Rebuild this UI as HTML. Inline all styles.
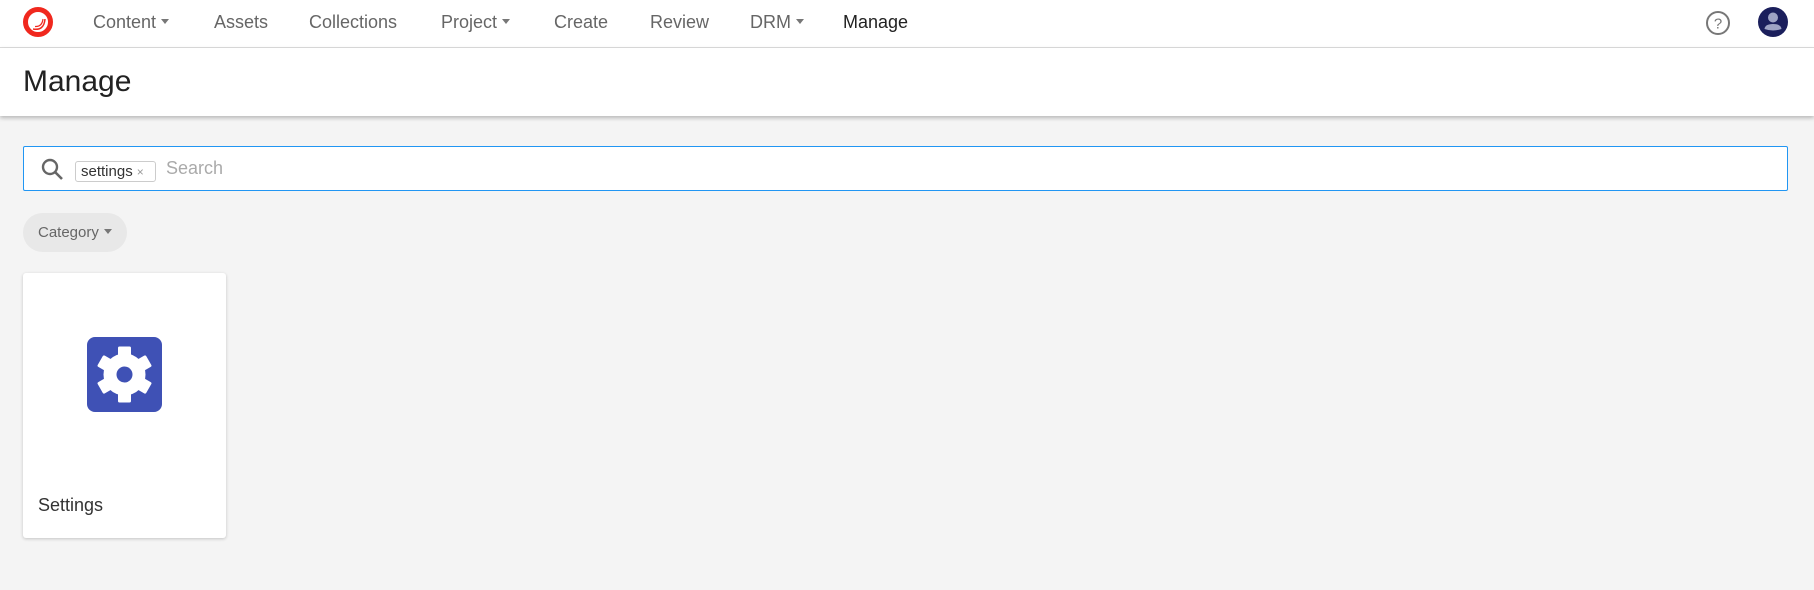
<!DOCTYPE html>
<html><head><meta charset="utf-8"><style>
*{margin:0;padding:0;box-sizing:border-box}
body{width:1814px;height:590px;background:#f4f4f4;font-family:"Liberation Sans",sans-serif;position:relative;overflow:hidden}
.nav{position:absolute;left:0;top:0;width:1814px;height:48px;background:#fff;border-bottom:1px solid #ddd}
.nav span{position:absolute;top:12px;font-size:18px;color:#666;white-space:nowrap}
.car{display:inline-block;width:0;height:0;border-left:4px solid transparent;border-right:4px solid transparent;border-top:5px solid #777;vertical-align:middle;margin-left:5px;margin-top:-3px}
.hdr{position:absolute;left:0;top:48px;width:1814px;height:68px;background:#fff;box-shadow:0 2px 4px rgba(0,0,0,.25)}
.hdr h1{position:absolute;left:23px;top:17px;font-weight:normal;font-size:30px;color:#222}
.search{position:absolute;left:23px;top:146px;width:1765px;height:45px;background:#fff;border:1px solid #2196f3;border-radius:2px}
.chip{position:absolute;left:51px;top:14px;width:81px;height:21px;border:1px solid #ccc;border-radius:3px;font-size:15px;color:#333;padding:1px 0 0 5px}
.chip i{font-style:normal;color:#999;font-size:12px;margin-left:4px}
.ph{position:absolute;left:142px;top:11px;font-size:18px;color:#aaa}
.cat{position:absolute;left:23px;top:213px;width:104px;height:39px;border-radius:20px;background:#e8e8e8;font-size:15px;color:#666;padding:11px 0 0 15px}
.card{position:absolute;left:23px;top:273px;width:203px;height:265px;background:#fff;border-radius:3px;box-shadow:0 1px 3px rgba(0,0,0,.2)}
.card .t{position:absolute;left:15px;top:222px;font-size:18px;color:#333}
</style></head><body>
<div class="nav">
<svg style="position:absolute;left:22px;top:6px" width="32" height="32" viewBox="0 0 32 32"><circle cx="16" cy="16" r="12.5" fill="#fff" stroke="#f0281e" stroke-width="5"/><path d="M11 23 Q22 25 23 13" stroke="#f0281e" stroke-width="1.5" fill="none"/><path d="M13 20.5 Q20 21 21 13" stroke="#f0281e" stroke-width="1.2" fill="none"/></svg>
<span style="left:93px">Content<i class="car"></i></span>
<span style="left:214px">Assets</span>
<span style="left:309px">Collections</span>
<span style="left:441px">Project<i class="car"></i></span>
<span style="left:554px">Create</span>
<span style="left:650px">Review</span>
<span style="left:750px">DRM<i class="car"></i></span>
<span style="left:843px;color:#222">Manage</span>
<svg style="position:absolute;left:1705px;top:10px" width="26" height="26" viewBox="0 0 26 26"><circle cx="13" cy="13" r="11" fill="none" stroke="#777" stroke-width="2"/><text x="13" y="18.5" font-size="15" text-anchor="middle" fill="#777" font-family="Liberation Sans">?</text></svg>
<svg style="position:absolute;left:1758px;top:7px" width="30" height="30" viewBox="0 0 30 30"><circle cx="15" cy="15" r="15" fill="#1b1f5c"/><circle cx="15" cy="10.5" r="5" fill="#9ea3c4"/><path d="M6.5 22 Q7 17 15 17 Q23 17 23.5 22 Q15 25 6.5 22Z" fill="#9ea3c4"/></svg>
</div>
<div class="hdr"><h1>Manage</h1></div>
<div class="search">
<svg style="position:absolute;left:16px;top:10px" width="26" height="26" viewBox="0 0 26 26"><circle cx="10" cy="10" r="7" fill="none" stroke="#666" stroke-width="2.4"/><path d="M15 15 L22 22" stroke="#666" stroke-width="2.6"/></svg>
<div class="chip">settings<i>×</i></div>
<div class="ph">Search</div>
</div>
<div class="cat">Category<i class="car"></i></div>
<div class="card">
<svg style="position:absolute;left:64px;top:64px" width="75" height="75" viewBox="0 0 75 75"><rect width="75" height="75" rx="8" fill="#3f51b5"/>
<g transform="translate(37.5,37.5)" fill="#fff"><circle r="21"/>
<rect x="-6.5" y="-28" width="13" height="12" rx="1.5"/><rect x="-6.5" y="-28" width="13" height="12" rx="1.5" transform="rotate(60)"/><rect x="-6.5" y="-28" width="13" height="12" rx="1.5" transform="rotate(120)"/><rect x="-6.5" y="-28" width="13" height="12" rx="1.5" transform="rotate(180)"/><rect x="-6.5" y="-28" width="13" height="12" rx="1.5" transform="rotate(240)"/><rect x="-6.5" y="-28" width="13" height="12" rx="1.5" transform="rotate(300)"/>
<circle r="8" fill="#3f51b5"/></g></svg>
<div class="t">Settings</div>
</div>
</body></html>
